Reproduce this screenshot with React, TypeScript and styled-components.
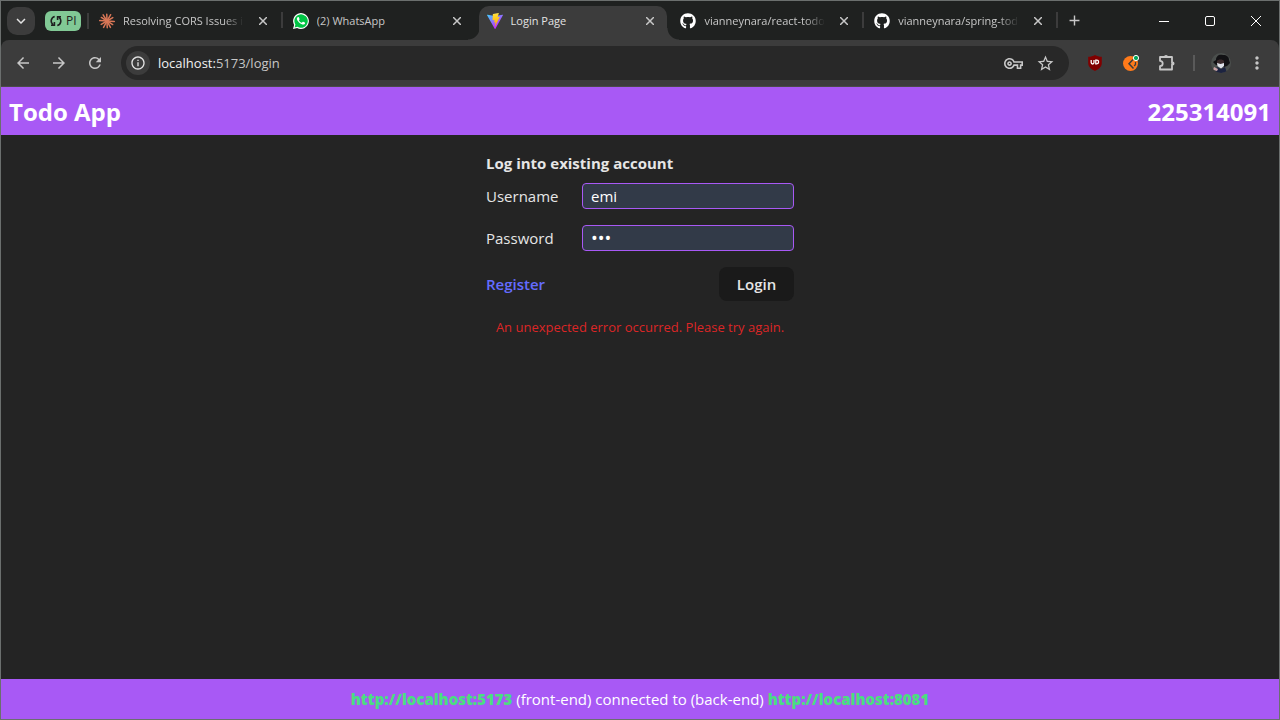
import React from "react";
import styled, { createGlobalStyle, css } from "styled-components";
import {
  MdAdd,
  MdArrowBack,
  MdArrowForward,
  MdExpandMore,
  MdInfoOutline,
  MdMoreVert,
  MdOutlineVpnKey,
  MdRefresh,
  MdStarOutline,
} from "react-icons/md";
import { FaGithub } from "react-icons/fa";

const GlobalStyle = createGlobalStyle`
  * { box-sizing: border-box; }
  body {
    margin: 0;
    background: #242424;
    color: #e6e6e6;
    font-family: "Segoe UI", "Open Sans", "Noto Sans", sans-serif;
    font-size: 15px;
    line-height: 24px;
  }
  button, input { font: inherit; color: inherit; }
  button { border: 0; padding: 0; background: none; cursor: pointer; }
  svg { display: block; flex: none; }
`;

const Window = styled.div`
  display: flex;
  flex-direction: column;
  min-height: 100vh;
  border: 1px solid #6b6f6e;
`;

const Row = css`
  display: flex;
  align-items: center;
`;

const Chrome = styled.div`
  background: #1f2120;
`;

const TabStrip = styled.header`
  ${Row}
  height: 39px;
`;

const TabSearch = styled.button`
  display: grid;
  place-items: center;
  width: 28px;
  height: 28px;
  margin: 0 10px 0 6px;
  border-radius: 10px;
  background: #3c3c3c;
  color: #e3e3e3;
`;

const GroupChip = styled.button`
  ${Row}
  gap: 4px;
  height: 20px;
  width: 36px;
  padding: 0 5px;
  margin-right: 6px;
  border-radius: 6px;
  background: #81c995;
  color: #1f2120;
  font-size: 12px;
  line-height: 20px;
`;

const Divider = styled.span<{ $tone?: string }>`
  flex: none;
  width: 2px;
  height: 16px;
  background: ${(p) => p.$tone ?? "#3c3c3c"};
`;

const Tabs = styled.nav`
  display: flex;
  align-self: stretch;
  flex: 0 1 969px;
  min-width: 0;
`;

const Tab = styled.div<{ $active?: boolean; $divided?: boolean }>`
  ${Row}
  position: relative;
  flex: 1 1 0;
  min-width: 0;
  padding: 0 13px 0 10px;
  color: ${(p) => (p.$active ? "#e3e3e3" : "#c7c7c7")};

  ${(p) =>
    p.$divided &&
    css`
      &::after {
        content: "";
        position: absolute;
        right: 0;
        top: 11px;
        width: 2px;
        height: 16px;
        background: #3c3c3c;
      }
    `}

  ${(p) =>
    p.$active &&
    css`
      margin-top: 5px;
      padding-bottom: 5px;
      &::before {
        content: "";
        position: absolute;
        inset: 0 3px 0 2px;
        border-radius: 10px 10px 0 0;
        background: #3c3c3c;
      }
    `}
`;

const Foot = styled.span<{ $side: "left" | "right" }>`
  position: absolute;
  bottom: 0;
  ${(p) => p.$side}: -9px;
  width: 12px;
  height: 12px;
  background: radial-gradient(
    circle at ${(p) => (p.$side === "left" ? "0 0" : "100% 0")},
    transparent 11px,
    #3c3c3c 12px
  );
`;

const TabLink = styled.a`
  ${Row}
  position: relative;
  flex: 1;
  min-width: 0;
  gap: 8px;
  color: inherit;
  text-decoration: none;
  font-size: 11px;
  line-height: 20px;
  white-space: nowrap;
`;

const TabTitle = styled.span<{ $fade?: boolean }>`
  flex: 1;
  min-width: 0;
  overflow: hidden;
  ${(p) =>
    p.$fade &&
    css`
      mask-image: linear-gradient(to left, transparent, #000 20px);
    `}
`;

const IconButton = styled.button<{ $w?: number }>`
  position: relative;
  display: grid;
  place-items: center;
  flex: none;
  width: ${(p) => p.$w ?? 36}px;
  height: 28px;
  color: #c7c7c7;
`;

const CloseButton = styled(IconButton)`
  width: 14px;
  margin-left: 12px;
`;

const WindowControls = styled.div`
  display: flex;
  margin-left: auto;
`;

const Toolbar = styled.div`
  ${Row}
  height: 47px;
  padding: 0 4px;
  background: #3c3c3c;
  border-bottom: 1px solid #4a4a4a;
  border-radius: 8px 8px 0 0;
`;

const AddressBar = styled.div`
  ${Row}
  flex: 1;
  height: 34px;
  margin: 0 8px;
  padding: 0 8px 0 5px;
  border-radius: 17px;
  background: #282828;
`;

const SiteInfo = styled.button`
  display: grid;
  place-items: center;
  width: 24px;
  height: 24px;
  border-radius: 12px;
  background: #3c3c3c;
  color: #e3e3e3;
`;

const Address = styled.div`
  flex: 1;
  padding-left: 8px;
  font-size: 13px;
  color: #c7c7c7;
  span { color: #f2f2f2; }
`;

const AppBar = styled.header`
  ${Row}
  justify-content: space-between;
  height: 48px;
  padding: 2px 8px 0;
  background: #a859f5;
  color: #fff;
  font-size: 24px;
  line-height: 32px;
  font-weight: 700;
`;

const AppTitle = styled.h1`
  margin: 0;
  font: inherit;
`;

const Main = styled.main`
  flex: 1;
  display: flex;
  justify-content: center;
  align-items: flex-start;
  padding: 16px;
`;

const Form = styled.form`
  display: flex;
  flex-direction: column;
  width: 308px;
`;

const FormTitle = styled.h2`
  margin: 0 0 8px;
  font-size: 15px;
  line-height: 24px;
  font-weight: 700;
`;

const Field = styled.div`
  ${Row}
  justify-content: space-between;
  height: 26px;
  margin-bottom: 16px;
`;

const Input = styled.input`
  width: 212px;
  height: 26px;
  padding: 0 8px;
  border: 1px solid #a859f5;
  border-radius: 4px;
  outline: 0;
  background: #323a48;
  color: #fff;

  &[type="password"] {
    font-size: 18px;
  }
`;

const Actions = styled.div`
  ${Row}
  justify-content: space-between;
`;

const RegisterLink = styled.a`
  color: #646cff;
  font-weight: 600;
  text-decoration: none;
`;

const LoginButton = styled.button`
  width: 75px;
  height: 34px;
  border-radius: 8px;
  background: #1a1a1a;
  font-weight: 600;
`;

const ErrorText = styled.p`
  margin: 16px 0 0;
  color: #dc2626;
  font-size: 13px;
  line-height: 20px;
  text-align: center;
`;

const StatusBar = styled.footer`
  height: 40px;
  padding: 8px;
  background: #a859f5;
  color: #fff;
  text-align: center;
`;

const HostLink = styled.a`
  color: #4ade80;
  font-weight: 800;
  text-decoration: none;
`;

const Burst = () => (
  <svg width="16" height="16" viewBox="0 0 16 16" stroke="#d97757" strokeWidth="1.5" strokeLinecap="round">
    {[4, 32, 62, 88, 118, 150, 183, 212, 238, 268, 300, 330].map((a, i) => (
      <path key={a} d={`M8 8 H${i % 2 ? 14.7 : 15.3}`} transform={`rotate(${a} 8 8)`} />
    ))}
  </svg>
);

const WhatsApp = () => (
  <svg width="16" height="16" viewBox="0 0 16 16">
    <path d="M0 16l1.1-4.1A7.9 7.9 0 1 1 4.1 14.9z" fill="#fff" />
    <path d="M1.6 14.4l.8-2.8A6.7 6.7 0 1 1 4.5 13.7z" fill="#00c444" />
    <path
      d="M5.8 4.3c-.2-.4-.3-.4-.6-.4-.6 0-1.3.7-1.3 1.8 0 1.1.8 2.2 1 2.4.9 1.3 2.2 2.7 4.4 3.4 1.4.4 2.7-.4 2.8-1.6 0-.3-.1-.4-.3-.5l-1.5-.7c-.2-.1-.4-.1-.5.1l-.7.8c-.1.2-.3.2-.5.1-1.1-.4-2-1.2-2.7-2.3-.1-.2 0-.3.1-.4l.5-.6c.1-.2.1-.3 0-.5z"
      fill="#fff"
    />
  </svg>
);

const Vite = () => (
  <svg width="16" height="16" viewBox="0 0 256 257">
    <defs>
      <linearGradient id="viteBody" x1="0" y1="0" x2=".6" y2=".8">
        <stop offset="0" stopColor="#41d1ff" />
        <stop offset="1" stopColor="#bd34fe" />
      </linearGradient>
      <linearGradient id="viteBolt" x1=".4" y1="0" x2=".5" y2="1">
        <stop offset="0" stopColor="#ffea83" />
        <stop offset=".1" stopColor="#ffdd35" />
        <stop offset="1" stopColor="#ffa800" />
      </linearGradient>
    </defs>
    <path
      fill="url(#viteBody)"
      d="M255.153 37.938L134.897 252.976c-2.483 4.440-8.862 4.466-11.382.048L.875 37.958c-2.746-4.814 1.371-10.646 6.827-9.670l120.385 21.517a6.537 6.537 0 0 0 2.322-.004l117.867-21.483c5.438-.991 9.574 4.796 6.877 9.620Z"
    />
    <path
      fill="url(#viteBolt)"
      d="M185.432.063L96.440 17.501a3.268 3.268 0 0 0-2.634 3.014l-5.474 92.456a3.268 3.268 0 0 0 3.997 3.378l24.777-5.718c2.318-.535 4.413 1.507 3.936 3.838l-7.361 36.047c-.495 2.426 1.782 4.500 4.151 3.780l15.304-4.649c2.372-.720 4.652 1.360 4.150 3.788l-11.698 56.621c-.732 3.542 3.979 5.473 5.943 2.437l1.313-2.028 72.516-144.720c1.215-2.423-.880-5.186-3.540-4.672l-25.505 4.922c-2.396.462-4.435-1.770-3.759-4.114l16.646-57.705c.677-2.350-1.370-4.583-3.769-4.113Z"
    />
  </svg>
);

const SyncGlyph = () => (
  <svg width="12" height="12" viewBox="0 0 12 12" fill="none" stroke="#1f2120" strokeWidth="1.6">
    <path d="M4.7 1.5A4.6 4.6 0 0 0 3 9.600M1 10.200h3.400V7M7.300 10.500A4.6 4.6 0 0 0 9 2.400M11 1.800H7.600V5" />
  </svg>
);

const CloseGlyph = () => (
  <svg width="8" height="8" viewBox="0 0 8 8" stroke="currentColor" strokeWidth="1.5">
    <path d="M0 0l8 8M8 0L0 8" />
  </svg>
);

const Shield = () => (
  <svg width="16" height="16" viewBox="0 0 16 16">
    <path d="M8 0c2 1.300 4 1.700 6.800 1.800v6.400c0 3.600-3 5.800-6.800 7.800-3.800-2-6.800-4.200-6.800-7.800V1.800C4 1.700 6 1.300 8 0z" fill="#800000" />
    <path d="M4.200 5v2.600a1.400 1.400 0 0 0 2.800 0V5M8.800 5.200v3.600h1a1.800 1.800 0 0 0 0-3.600z" fill="none" stroke="#fff" strokeWidth="1.3" />
  </svg>
);

const OrangeExtension = () => (
  <svg width="18" height="18" viewBox="0 0 18 18">
    <circle cx="8.5" cy="9.5" r="7.5" fill="#ff7a1a" />
    <path d="M11 5.500L7 9.700l4.500 4.800" fill="none" stroke="#3c3c3c" strokeWidth="1.5" />
    <path d="M13.500 8v2.500l-1.300 1.500" fill="none" stroke="#3c3c3c" strokeWidth="1.3" />
    <circle cx="14" cy="4" r="2.6" fill="#00a65a" stroke="#fff" strokeWidth="1" />
  </svg>
);

const Puzzle = () => (
  <svg width="18" height="18" viewBox="0 0 18 18">
    <path
      d="M2 3H14V8.500a2 2 0 0 1 0 2V15.500H2V12.200a2.600 2.600 0 0 0 0-5.400z"
      fill="none"
      stroke="#c7c7c7"
      strokeWidth="1.8"
      strokeLinejoin="round"
    />
    <path d="M6 3a2 2 0 0 1 4 0zM14.500 7.500a2 2 0 0 1 0 4z" fill="#c7c7c7" />
  </svg>
);

const Avatar = () => (
  <svg width="20" height="20" viewBox="0 0 20 20">
    <defs>
      <clipPath id="face">
        <circle cx="10" cy="10" r="10" />
      </clipPath>
    </defs>
    <g clipPath="url(#face)">
      <path d="M0 0h20v20H0z" fill="#4b4f4d" />
      <path d="M2 9l3-2c0-4 3-6 7-5 4 0 6 2 6 5l1 3-3 3-3 1-8-2z" fill="#121114" />
      <path d="M6 8c1-2 6-2 7 0v3H6z" fill="#3a2a2c" />
      <path d="M6 10l3.500 1 3.500-1v3l-3 2.500L6.500 13z" fill="#dfe2ea" />
      <path d="M3 20l3-6 4 2 4-2 2 6z" fill="#1c2340" />
      <path d="M3 14l4 2-1 2-4-1z" fill="#c9a3a5" />
    </g>
  </svg>
);

const tabs = [
  { title: "Resolving CORS Issues i", icon: <Burst />, href: "#claude", fade: true, divided: true },
  { title: "(2) WhatsApp", icon: <WhatsApp />, href: "#whatsapp" },
  { title: "Login Page", icon: <Vite />, href: "#login", active: true },
  { title: "vianneynara/react-todo", icon: <FaGithub size={16} color="#fff" />, href: "#react", fade: true, divided: true },
  { title: "vianneynara/spring-tod", icon: <FaGithub size={16} color="#fff" />, href: "#spring", fade: true, divided: true },
];

const BrowserTabs = () => (
  <TabStrip>
    <TabSearch aria-label="Search tabs">
      <MdExpandMore size={18} />
    </TabSearch>
    <GroupChip>
      <SyncGlyph />
      PI
    </GroupChip>
    <Divider />
    <Tabs aria-label="Tabs">
      {tabs.map((t) => (
        <Tab key={t.href} $active={t.active} $divided={t.divided}>
          {t.active && (
            <>
              <Foot $side="left" />
              <Foot $side="right" />
            </>
          )}
          <TabLink href={t.href}>
            {t.icon}
            <TabTitle $fade={t.fade}>{t.title}</TabTitle>
          </TabLink>
          <CloseButton aria-label={`Close ${t.title}`}>
            <CloseGlyph />
          </CloseButton>
        </Tab>
      ))}
    </Tabs>
    <IconButton $w={32} aria-label="New tab">
      <MdAdd size={17} />
    </IconButton>
    <WindowControls>
      <IconButton $w={46} aria-label="Minimize">
        <svg width="10" height="10" stroke="#fff">
          <path d="M0 5.500h10" />
        </svg>
      </IconButton>
      <IconButton $w={46} aria-label="Maximize">
        <svg width="10" height="10" stroke="#fff" fill="none">
          <rect x=".5" y=".5" width="9" height="9" rx="1.5" />
        </svg>
      </IconButton>
      <IconButton $w={46} aria-label="Close window">
        <svg width="10" height="10" stroke="#fff">
          <path d="M0 0l10 10M10 0L0 10" />
        </svg>
      </IconButton>
    </WindowControls>
  </TabStrip>
);

const BrowserToolbar = () => (
  <Toolbar>
    <IconButton aria-label="Back">
      <MdArrowBack size={18} />
    </IconButton>
    <IconButton aria-label="Forward">
      <MdArrowForward size={18} />
    </IconButton>
    <IconButton aria-label="Reload">
      <MdRefresh size={18} />
    </IconButton>
    <AddressBar>
      <SiteInfo aria-label="Site information">
        <MdInfoOutline size={16} />
      </SiteInfo>
      <Address>
        <span>localhost:</span>5173/login
      </Address>
      <IconButton $w={32} aria-label="Passwords">
        <MdOutlineVpnKey size={19} />
      </IconButton>
      <IconButton $w={32} aria-label="Bookmark">
        <MdStarOutline size={19} />
      </IconButton>
    </AddressBar>
    <IconButton aria-label="Content blocker">
      <Shield />
    </IconButton>
    <IconButton aria-label="Extension">
      <OrangeExtension />
    </IconButton>
    <IconButton aria-label="Extensions">
      <Puzzle />
    </IconButton>
    <IconButton $w={18} as="span">
      <Divider $tone="#5a5a5a" />
    </IconButton>
    <IconButton aria-label="Profile">
      <Avatar />
    </IconButton>
    <IconButton aria-label="Menu">
      <MdMoreVert size={20} />
    </IconButton>
  </Toolbar>
);

export default function App() {
  return (
    <>
      <GlobalStyle />
      <Window>
        <Chrome>
          <BrowserTabs />
          <BrowserToolbar />
        </Chrome>
        <AppBar>
          <AppTitle>Todo App</AppTitle>
          <span>225314091</span>
        </AppBar>
        <Main>
          <Form onSubmit={(e) => e.preventDefault()}>
            <FormTitle>Log into existing account</FormTitle>
            <Field>
              <label htmlFor="username">Username</label>
              <Input id="username" type="text" defaultValue="emi" />
            </Field>
            <Field>
              <label htmlFor="password">Password</label>
              <Input id="password" type="password" defaultValue="emi" />
            </Field>
            <Actions>
              <RegisterLink href="#register">Register</RegisterLink>
              <LoginButton type="submit">Login</LoginButton>
            </Actions>
            <ErrorText role="alert">An unexpected error occurred. Please try again.</ErrorText>
          </Form>
        </Main>
        <StatusBar>
          <HostLink href="http://localhost:5173">http://localhost:5173</HostLink> (front-end) connected to (back-end){" "}
          <HostLink href="http://localhost:8081">http://localhost:8081</HostLink>
        </StatusBar>
      </Window>
    </>
  );
}
